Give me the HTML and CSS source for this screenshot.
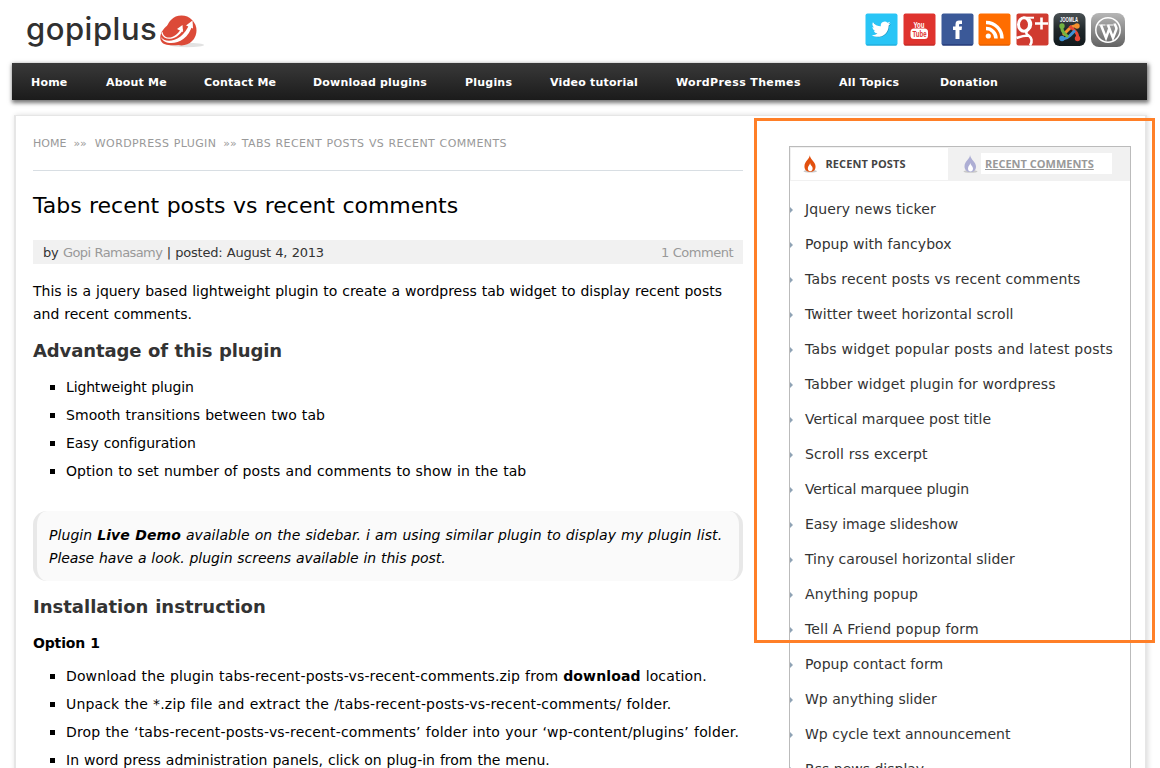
FILE: index.html
```html
<!DOCTYPE html>
<html lang="en">
<head>
<meta charset="utf-8">
<title>Tabs recent posts vs recent comments</title>
<link rel="stylesheet" href="styles.css">
</head>
<body>
<div class="page">
<header class="header">
  <a class="logo"><span class="logo-text">gopiplus</span>
    <svg class="logo-mark" width="46" height="36" viewBox="0 0 46 36"><ellipse cx="27" cy="31" rx="17" ry="2.200" fill="#e2e2e2"/><circle cx="21.500" cy="16.500" r="15" fill="#dc4a38"/><path d="M8 11C1 16-1 23 1 27c2 4 8 5 18 4z" fill="#dc4a38"/><path d="M2.500 17.500c1 9 13 8 18.500-3l2 1C18 26 4 28 1.500 19.500z" fill="#fff"/><path d="M1 23c4 7 22 5 28.500-13.500l3 1C27 32 4 33 1 23z" fill="#fff"/><path d="M17 15l5.500-4 .5 7zM26 11.500l6.500-5 .5 8z" fill="#fff"/></svg>
  </a>
  <div class="social">
    <svg width="33" height="34" viewBox="0 0 33 34"><rect x=".5" y=".5" width="32" height="32" rx="2" fill="#29c5f6"/><path d="M1.500 32h30" stroke="#1fa3d0"/><path transform="translate(7.500 7.500) scale(.8)" d="M23 4.600c-.8.400-1.700.600-2.700.700 1-.600 1.700-1.500 2-2.500-.9.500-1.900.900-3 1.100A4.700 4.700 0 0 0 11.300 8.200C7.400 8 4 6.100 1.700 3.200c-1.200 2.100-.6 4.900 1.500 6.300-.8 0-1.500-.2-2.100-.6 0 2.300 1.600 4.200 3.800 4.700-.7.200-1.400.2-2.100.1.600 1.900 2.300 3.200 4.400 3.200A9.500 9.500 0 0 1 .2 18.900C9 24 20.700 18.700 20.700 7.100c.9-.7 1.700-1.500 2.300-2.500z" fill="#1a8fb8"/><path transform="translate(6.500 6.500) scale(.83)" d="M23 4.600c-.8.400-1.700.600-2.700.700 1-.600 1.700-1.500 2-2.500-.9.500-1.900.900-3 1.100A4.700 4.700 0 0 0 11.300 8.200C7.400 8 4 6.100 1.700 3.200c-1.200 2.100-.6 4.900 1.500 6.300-.8 0-1.500-.2-2.100-.6 0 2.300 1.600 4.200 3.800 4.700-.7.200-1.400.2-2.100.1.600 1.900 2.300 3.200 4.400 3.200A9.500 9.500 0 0 1 .2 18.900C9 24 20.700 18.700 20.700 7.100c.9-.7 1.700-1.500 2.300-2.500z" fill="#fff"/></svg>
    <svg width="33" height="34" viewBox="0 0 33 34"><rect x=".5" y=".5" width="32" height="32" rx="2" fill="#df332e"/><path d="M1.500 32h30" stroke="#b52824"/><text class="you" x="10.500" y="14.500" textLength="11" lengthAdjust="spacingAndGlyphs">You</text><rect x="7.500" y="15.500" width="17.500" height="10.500" rx="3.500" fill="#fff"/><text class="tube" x="9.500" y="24" textLength="14" lengthAdjust="spacingAndGlyphs">Tube</text></svg>
    <svg width="33" height="34" viewBox="0 0 33 34"><rect x=".5" y=".5" width="32" height="32" rx="2" fill="#3b5998"/><path d="M1.500 32h30" stroke="#1a2c6b"/><path d="M14.500 26V17H12v-3.500h2.500v-2.300C14.500 8.500 16 7.500 18 7.500h3V11h-1.700c-1 0-1.300.4-1.300 1.200v1.300h3l-.4 3.500H18.500v9z" fill="#fff"/></svg>
    <svg width="33" height="34" viewBox="0 0 33 34"><rect x=".5" y=".5" width="32" height="32" rx="2" fill="#ff6d00"/><path d="M1.500 32h30" stroke="#d65900"/><circle cx="10.300" cy="23" r="2.600" fill="#fff"/><path d="M8 15.500c5.500 0 10 4.500 10 10M8 9.500c9 0 16 7 16 16" fill="none" stroke="#fff" stroke-width="3.500"/></svg>
    <svg width="33" height="34" viewBox="0 0 33 34"><rect x=".5" y=".5" width="32" height="32" rx="2" fill="#d03b30"/><g fill="none" stroke="#fff"><ellipse cx="8" cy="11.500" rx="5.500" ry="6.800" stroke-width="3"/><path d="M7 4.700h11" stroke-width="2"/><path d="M12.500 6c3.500 3 3 8 0 10.500s-3 4 0 6 4.500 6 1.500 10M.5 25c4-1.500 7-2.500 12-2.500" stroke-width="2.600"/><path d="M19 10.500h13M25.500 4.500v12" stroke-width="2.600"/></g></svg>
    <svg width="33" height="34" viewBox="0 0 33 34"><defs><linearGradient id="jb" x2="0" y2="1"><stop stop-color="#4a5154"/><stop offset=".5" stop-color="#20282b"/><stop offset="1" stop-color="#11191c"/></linearGradient></defs><rect x=".5" y="0" width="32" height="33" rx="6" fill="url(#jb)"/><text class="joomla" x="7" y="9" textLength="18" lengthAdjust="spacingAndGlyphs">JOOMLA</text><g fill="none" stroke-width="3"><path d="M24 13c-4-1-6 1-8 3l-6 6" stroke="#f5922f"/><path d="M24.500 25.500c1-4-1-6-3-8l-5-4.500" stroke="#e74735"/><path d="M9 25.500c4 1 6-1 8-3l5-5" stroke="#3d91d6"/><path d="M9 13c-1 4 1 6 3 8l3 3" stroke="#73b441"/></g><circle cx="9" cy="13" r="2.700" fill="#73b441"/><circle cx="24" cy="13" r="2.700" fill="#f5922f"/><circle cx="24.500" cy="25.500" r="2.700" fill="#e74735"/><circle cx="9" cy="25.500" r="2.700" fill="#3d91d6"/></svg>
    <svg width="35" height="34" viewBox="0 0 35 34"><defs><linearGradient id="wb" x2="0" y2="1"><stop stop-color="#b6b6b6"/><stop offset="1" stop-color="#626262"/></linearGradient></defs><rect x="0" y="0" width="34" height="34" rx="8" fill="url(#wb)"/><g transform="translate(-.5 0)"><circle cx="17.500" cy="17" r="12.200" fill="none" stroke="#fff" stroke-width="1.500"/><path d="M8 12h7M16 12h7" stroke="#fff" stroke-width="1.200"/><path d="M10.500 12l5 13 3-8.500M17.500 12l5 13 3.200-8.500c1-3-1.500-3.500-1.500-6" fill="none" stroke="#fff" stroke-width="2.500"/></g></svg>
  </div>
</header>
<nav class="nav"><a>Home</a><a>About Me</a><a>Contact Me</a><a>Download plugins</a><a>Plugins</a><a>Video tutorial</a><a class="themes">WordPress Themes</a><a>All Topics</a><a>Donation</a></nav>
<div class="card">
  <main class="main">
    <div class="crumbs"><a>HOME</a><i>»»</i><a class="crumb">WORDPRESS PLUGIN</a><i>»»</i><span class="crumb">TABS RECENT POSTS VS RECENT COMMENTS</span></div>
    <h1 class="title">Tabs recent posts vs recent comments</h1>
    <div class="meta"><span>by <a class="author">Gopi Ramasamy</a> | posted: August 4, 2013</span><a class="comments">1 Comment</a></div>
    <p class="intro">This is a jquery based lightweight plugin to create a wordpress tab widget to display recent posts<br>and recent comments.</p>
    <h3 class="heading first">Advantage of this plugin</h3>
    <ul class="list">
      <li class="tighter">Lightweight plugin</li><li class="loose">Smooth transitions between two tab</li><li class="tight">Easy configuration</li><li class="loose">Option to set number of posts and comments to show in the tab</li>
    </ul>
    <blockquote class="quote"><span class="loose">Plugin <b>Live Demo</b> available on the sidebar. i am using similar plugin to display my plugin list.</span><br><span class="tight">Please have a look. plugin screens available in this post.</span></blockquote>
    <h3 class="heading second">Installation instruction</h3>
    <p class="option">Option 1</p>
    <ul class="list">
      <li class="wide">Download the plugin tabs-recent-posts-vs-recent-comments.zip from <b>download</b> location.</li><li class="wider">Unpack the *.zip file and extract the /tabs-recent-posts-vs-recent-comments/ folder.</li><li class="wider">Drop the ‘tabs-recent-posts-vs-recent-comments’ folder into your ‘wp-content/plugins’ folder.</li><li>In word press administration panels, click on plug-in from the menu.</li>
    </ul>
  </main>
  <aside class="sidebar">
    <div class="tabs">
      <a class="tab active"><svg width="16" height="19" viewBox="0 0 16 19"><ellipse cx="7.500" cy="16.500" rx="7" ry="1.300" fill="#c9c9c9"/><path d="M7 0C7 4 1.500 6 1.500 11.500 1.500 15 4 17 7.500 17S13 15 13 11.500C13 7 8 5 7 0z" fill="#e2500f"/><path d="M7.300 8c0 2-2.300 3-2.300 5.500C5 15.500 6 16.500 7.500 16.500S10 15.500 10 13.500C10 11 7.500 10.500 7.300 8z" fill="#fff"/></svg><span>RECENT POSTS</span></a>
      <a class="tab"><svg width="16" height="19" viewBox="0 0 16 19"><ellipse cx="7.500" cy="16.500" rx="7" ry="1.300" fill="#c9c9c9"/><path d="M7 0C7 4 1.500 6 1.500 11.500 1.500 15 4 17 7.500 17S13 15 13 11.500C13 7 8 5 7 0z" fill="#adaed4"/><path d="M7.300 8c0 2-2.300 3-2.300 5.500C5 15.500 6 16.500 7.500 16.500S10 15.500 10 13.500C10 11 7.500 10.500 7.300 8z" fill="#fff"/></svg><span>RECENT COMMENTS</span></a>
    </div>
    <ul class="posts">
      <li class="wide">Jquery news ticker</li><li class="loose">Popup with fancybox</li><li class="wider">Tabs recent posts vs recent comments</li><li class="loose">Twitter tweet horizontal scroll</li><li class="widest">Tabs widget popular posts and latest posts</li><li class="wide">Tabber widget plugin for wordpress</li><li>Vertical marquee post title</li><li class="wide">Scroll rss excerpt</li><li class="tighter">Vertical marquee plugin</li><li class="tight">Easy image slideshow</li><li>Tiny carousel horizontal slider</li><li class="wide">Anything popup</li><li class="wider">Tell A Friend popup form</li><li class="loose">Popup contact form</li><li>Wp anything slider</li><li>Wp cycle text announcement</li><li>Rss news display</li>
    </ul>
  </aside>
</div>
<div class="highlight"></div>
</div>
</body>
</html>
```
FILE: styles.css
```css
* { box-sizing: border-box; }
body { margin: 0; background: #fff; color: #000; font-family: Verdana, "DejaVu Sans", sans-serif; }
ul, p, h1, h3, blockquote { margin: 0; padding: 0; }
ul { list-style: none; }
.page { position: relative; width: 1160px; height: 768px; overflow: hidden; }
.header { display: flex; justify-content: space-between; height: 63px; padding: 13px 34px 0 26px; }
.logo { display: flex; }
.logo-text { width: 134px; font: 500 31px/36px Inter, sans-serif; color: #303030; letter-spacing: .5px; margin-top: -2px; }
.logo-mark { margin-top: 1px; }
.social { display: flex; gap: 4.600px; }
.you { font: bold 9px "Liberation Sans", sans-serif; fill: #fff; }
.tube { font: bold 9px "Liberation Sans", sans-serif; fill: #df332e; }
.joomla { font: bold 7px "Liberation Sans", sans-serif; fill: #fff; }
.nav { display: grid; grid-template-columns: 75px 98px 109px 152px 85px 126px 163px 101px auto; margin-left: 12px; width: 1135px; height: 37px; padding-left: 19px; background: linear-gradient(#393939, #1b1b1b); box-shadow: 1px 2px 4px 1px #777; font-size: 11px; font-weight: bold; line-height: 38px; color: #fff; letter-spacing: .21px; white-space: nowrap; }
.nav a { padding-top: 0.500px; }
.themes { letter-spacing: .38px; }
.card { display: flex; justify-content: space-between; margin: 15px 0 0 14px; width: 1133px; height: 700px; padding: 0 14px 0 17px; border: 1px solid #e6e6e6; border-width: 1px 2px; box-shadow: 1px 0 5px #ddd; background: #fff; white-space: nowrap; }
.main { width: 710px; font-size: 14px; line-height: 23px; word-spacing: .5px; }
.tighter { letter-spacing: -.15px; }
.tight { letter-spacing: -.06px; }
.loose { letter-spacing: .065px; }
.wide { letter-spacing: .12px; }
.wider { letter-spacing: .165px; }
.widest { letter-spacing: .21px; }
.crumbs { display: flex; height: 55px; border-bottom: 1px solid #d8dee3; font-size: 11px; line-height: 55px; color: #999; }
.crumb { letter-spacing: .4px; }
.crumbs i { font-style: normal; margin: 0 8px 0 7px; }
.crumbs i:nth-of-type(2) { margin-right: 5px; }
.title { height: 69px; font-size: 22px; font-weight: normal; line-height: 69px; letter-spacing: -.03px; }
.meta { display: flex; justify-content: space-between; height: 24px; padding: 0 10px; background: #f1f1f1; font-size: 13px; line-height: 25px; color: #333; letter-spacing: -.23px; }
.meta a { color: #999; }
.meta .author { letter-spacing: -.58px; }
.comments { letter-spacing: -.5px; }
.intro { padding-top: 16px; letter-spacing: -.02px; }
.heading { font-size: 18px; color: #333; }
.first { height: 47px; line-height: 49px; letter-spacing: -.12px; }
.second { height: 51px; line-height: 51px; }
.list li { display: block; height: 28px; line-height: 28px; }
.list li::before { content: ""; display: inline-block; vertical-align: 2px; width: 5px; height: 5px; margin: 0 11px 0 17px; background: #000; }
.quote { margin-top: 26px; height: 70px; padding: 13px 12px 11px; border: solid #e8e8e8; border-width: 0 4px; border-radius: 14px; background: #fafafa; font-style: italic; }
.option { height: 30px; line-height: 22px; font-weight: bold; letter-spacing: -.15px; }
.sidebar { margin-top: 30px; width: 342px; height: 680px; border: 1px solid #bbb; }
.tabs { display: flex; height: 34px; background: #f1f1f1; border: 1px solid #f1f1f1; font: bold 11px/32px "Open Sans", sans-serif; }
.tab { display: flex; align-items: center; padding-left: 15px; color: #999; }
.tab span { margin-left: 2px; height: 21px; width: 131px; line-height: 22px; padding-left: 4px; margin-top: -2px; background: #fff; text-decoration: underline; }
.active { width: 157px; padding-left: 12px; background: #fff; color: #444; }
.active span { text-decoration: none; margin-left: 3px; letter-spacing: .1px; }
.posts { padding-top: 11px; font-size: 14px; color: #333; }
.posts li { display: flex; align-items: center; height: 35px; line-height: 35px; }
.posts li::before { content: ""; margin: 1px 12px 0 0; border-left: 3px solid #8fa3b5; border-top: 3px solid transparent; border-bottom: 3px solid transparent; }
.highlight { position: absolute; left: 754px; top: 118px; width: 401px; height: 525px; border: 3px solid #ff7f27; }
```
